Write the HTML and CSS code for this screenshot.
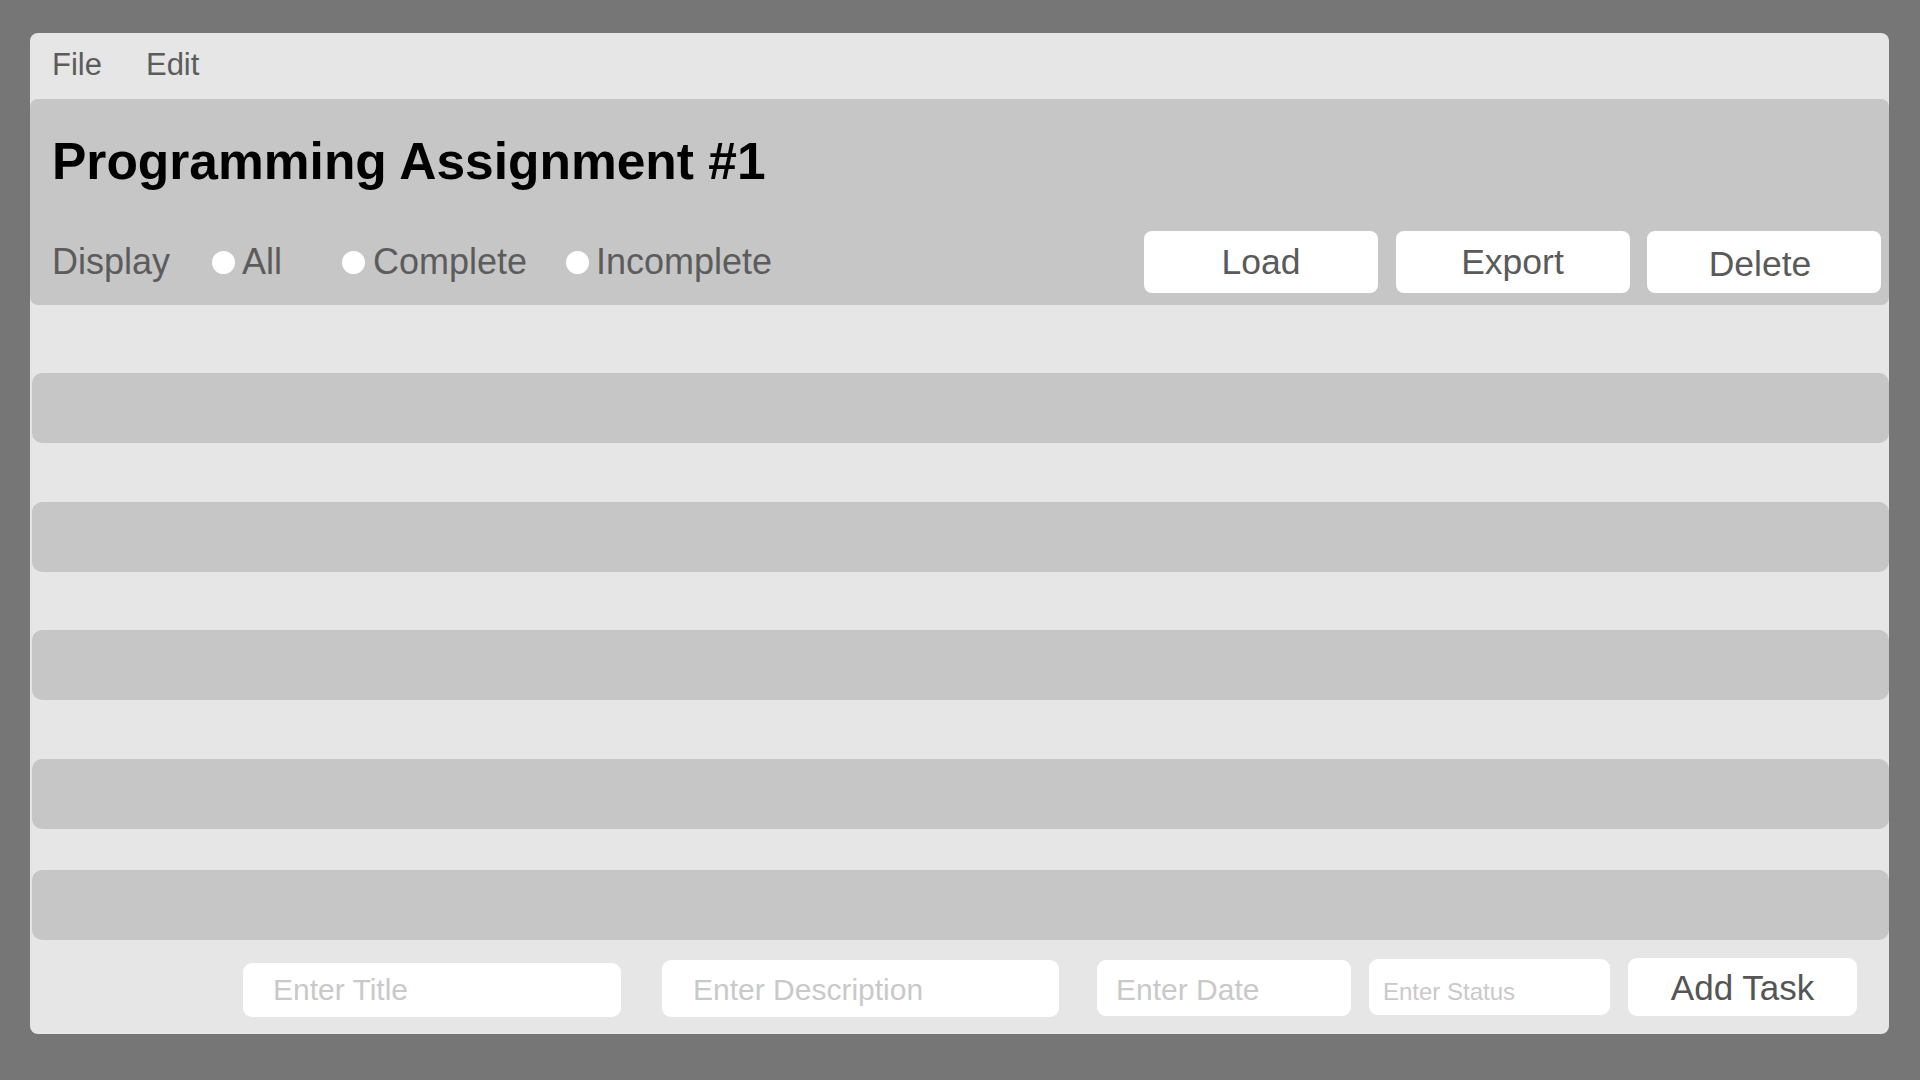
FILE: index.html
```html
<!DOCTYPE html>
<html>
<head>
<meta charset="utf-8">
<title>Programming Assignment #1</title>
<link rel="stylesheet" href="styles.css">
</head>
<body>
<div class="window">
  <div class="menubar">
    <span class="menu-item">File</span>
    <span class="menu-item">Edit</span>
  </div>
  <div class="header">
    <h1 class="title">Programming Assignment #1</h1>
    <div class="controls">
      <div class="filters">
        <span class="display-label">Display</span>
        <label class="opt opt-all"><span class="dot"></span><span class="opt-text">All</span></label>
        <label class="opt opt-complete"><span class="dot"></span><span class="opt-text opt-text-c">Complete</span></label>
        <label class="opt opt-incomplete"><span class="dot"></span><span class="opt-text opt-text-i">Incomplete</span></label>
      </div>
      <div class="actions">
        <button class="btn">Load</button>
        <button class="btn">Export</button>
        <button class="btn btn-delete">Delete</button>
      </div>
    </div>
  </div>
  <div class="tasks">
    <div class="task"></div>
    <div class="task"></div>
    <div class="task"></div>
    <div class="task"></div>
    <div class="task task-last"></div>
  </div>
  <div class="entry">
    <input class="field f-title" type="text" placeholder="Enter Title">
    <input class="field f-desc" type="text" placeholder="Enter Description">
    <input class="field f-date" type="text" placeholder="Enter Date">
    <input class="field f-status" type="text" placeholder="Enter Status">
    <button class="add-btn">Add Task</button>
  </div>
</div>
</body>
</html>
```

FILE: styles.css
```css
* { box-sizing: border-box; }

html, body {
  margin: 0;
  padding: 0;
  background: #767676;
  font-family: "Liberation Sans", Arial, sans-serif;
}

body {
  width: 1920px;
  height: 1080px;
  overflow: hidden;
  padding-top: 33px;
  padding-left: 30px;
}

.window {
  width: 1859px;
  height: 1001px;
  background: #e6e6e6;
  border-radius: 8px;
  overflow: hidden;
}

.menubar {
  height: 66px;
  display: flex;
  align-items: flex-start;
  padding-top: 14px;
  padding-left: 22px;
  gap: 44px;
}

.menu-item {
  font-size: 31px;
  color: #5c5c5c;
}

.header {
  height: 206px;
  background: #c6c6c6;
  border-radius: 8px;
  padding: 32px 8px 12px 22px;
}

.title {
  margin: 0 0 40px 0;
  font-size: 51.5px;
  font-weight: bold;
  color: #000;
  line-height: 60px;
}

.controls {
  display: flex;
  justify-content: space-between;
  align-items: center;
  height: 62px;
}

.filters {
  display: flex;
  align-items: center;
  font-size: 36px;
  color: #5c5c5c;
}

.display-label { width: 160px; }

.opt {
  display: flex;
  align-items: center;
}

.opt-all { width: 130px; }
.opt-complete { width: 224px; }

.dot {
  width: 23px;
  height: 23px;
  border-radius: 50%;
  background: #fff;
  margin-right: 7px;
  flex: none;
}

.opt-text-c { margin-left: 1px; }

.actions {
  display: flex;
  gap: 17.5px;
}

.btn {
  width: 234px;
  height: 62px;
  border: none;
  border-radius: 8px;
  background: #fff;
  font-family: "Liberation Sans", Arial, sans-serif;
  font-size: 35.5px;
  color: #5a5a5a;
  padding: 0;
}

.btn-delete { padding-top: 4px; padding-right: 8px; }

.tasks {
  padding-top: 68px;
  padding-left: 2px;
}

.task {
  height: 70px;
  background: #c6c6c6;
  border-radius: 10px;
  margin-bottom: 58.5px;
}

.task-last {
  margin-top: -17px;
  margin-bottom: 0;
}

.entry {
  display: flex;
  align-items: flex-start;
  padding-left: 213px;
  margin-top: 17px;
}

.field {
  border: none;
  border-radius: 9px;
  background: #fff;
  font-family: "Liberation Sans", Arial, sans-serif;
  font-size: 30px;
  color: #5a5a5a;
  outline: none;
}

.field::placeholder { color: #c9c9c9; }

.f-title {
  width: 378px;
  height: 54px;
  margin-top: 6px;
  padding-left: 30px;
  padding-top: 1px;
}

.f-desc {
  width: 397px;
  height: 57px;
  margin-top: 3px;
  margin-left: 41px;
  padding-left: 31px;
  padding-top: 4px;
}

.f-date {
  width: 254px;
  height: 56px;
  margin-top: 3px;
  margin-left: 38px;
  padding-left: 19px;
  padding-top: 5px;
}

.f-status {
  width: 241px;
  height: 56px;
  margin-top: 2px;
  margin-left: 18px;
  padding-left: 14px;
  font-size: 24px;
  padding-top: 10px;
}

.add-btn {
  width: 229px;
  height: 58px;
  margin-top: 1px;
  margin-left: 18px;
  border: none;
  border-radius: 9px;
  background: #fff;
  font-family: "Liberation Sans", Arial, sans-serif;
  font-size: 35px;
  color: #555;
  padding: 2px 0 0 0;
}
```
